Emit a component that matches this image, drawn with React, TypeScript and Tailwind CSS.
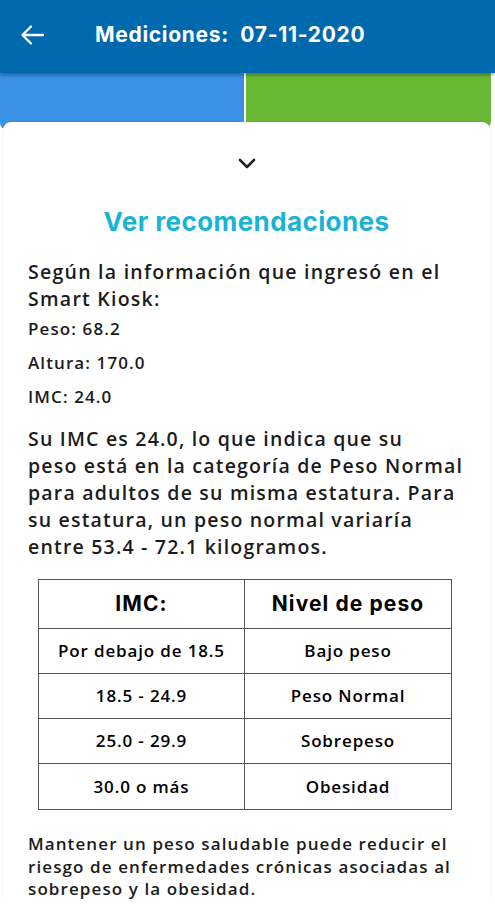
import React from "react";

const rows: [string, string][] = [
  ["Por debajo de 18.5", "Bajo peso"],
  ["18.5 - 24.9", "Peso Normal"],
  ["25.0 - 29.9", "Sobrepeso"],
  ["30.0 o más", "Obesidad"],
];

const paraLines = [
  "Su IMC es 24.0, lo que indica que su",
  "peso está en la categoría de Peso Normal",
  "para adultos de su misma estatura. Para",
  "su estatura, un peso normal variaría",
  "entre 53.4 - 72.1 kilogramos.",
];

const head = { fontFamily: 'Inter, "Open Sans", sans-serif' };

export default function App() {
  return (
    <div className="w-[495px] h-[906px] overflow-hidden bg-white relative" style={{ fontFamily: '"Open Sans", "Noto Sans", sans-serif' }}>
      <header className="h-[73px] bg-[#0068ad] flex items-center relative z-20 shadow-[0_2px_4px_rgba(0,0,0,0.35)]">
        <svg className="ml-[20px] mt-[-3px]" width="26" height="24" viewBox="0 0 26 24" fill="none" stroke="white" strokeWidth="2.3" strokeLinecap="round" strokeLinejoin="round">
          <path d="M23 12H3" />
          <path d="M11 3.5L2.5 12L11 20.5" />
        </svg>
        <h1 className="ml-[49px] mt-[-4px] text-white text-[21px] font-bold tracking-[0.7px]" style={head}>
          Mediciones:&nbsp; 07-11-2020
        </h1>
      </header>
      <div className="flex h-[56px] relative z-0">
        <div className="w-[244px] bg-[#3b91e6] rounded-bl-[6px]" />
        <div className="w-[2px] bg-white" />
        <div className="w-[245px] bg-[#6ab934] rounded-br-[8px]" />
      </div>
      <main className="relative z-10 mt-[-7px] mx-[3px] w-[487px] bg-white rounded-t-[8px] shadow-[0_-1px_2px_rgba(0,0,0,0.08)]">
        <div className="flex justify-center pt-[34px]">
          <svg width="22" height="14" viewBox="0 0 22 14" fill="none" stroke="#222" strokeWidth="2.6" strokeLinecap="round" strokeLinejoin="round">
            <path d="M4 4l7 7 7-7" />
          </svg>
        </div>
        <h2 className="mt-[36px] text-center text-[#1ab3d6] text-[26px] font-bold leading-[32px] tracking-[0.4px]" style={head}>
          Ver recomendaciones
        </h2>
        <div className="pl-[25px] pr-[20px] text-[#1c1c1c]">
          <p className="mt-[20px] text-[19.5px] font-semibold leading-[27px] tracking-[1.25px]">
            Según la información que ingresó en el Smart Kiosk:
          </p>
          <p className="mt-[6px] text-[17px] font-semibold leading-[22px] tracking-[1.1px]">Peso: 68.2</p>
          <p className="mt-[12px] text-[17px] font-semibold leading-[22px] tracking-[1.1px]">Altura: 170.0</p>
          <p className="mt-[12px] text-[17px] font-semibold leading-[22px] tracking-[1.1px]">IMC: 24.0</p>
          <p className="mt-[17px] text-[19.5px] font-semibold leading-[27px] tracking-[1.2px]">
            {paraLines.map((l) => (
              <span key={l} className="block whitespace-nowrap">{l}</span>
            ))}
          </p>
        </div>
        <div className="mt-[19px] ml-[35px] w-[414px] border-[1.5px] border-[#555] grid grid-cols-2">
          <div className="h-[49px] flex items-center justify-center border-r-[1.5px] border-b-[1.5px] border-[#555] text-[21px] font-bold tracking-[1.1px]" style={head}>IMC:</div>
          <div className="h-[49px] flex items-center justify-center border-b-[1.5px] border-[#555] text-[21px] font-bold tracking-[1.1px]" style={head}>Nivel de peso</div>
          {rows.map(([a, b], i) => (
            <React.Fragment key={a}>
              <div className={`h-[45px] flex items-center justify-center border-r-[1.5px] border-[#555] text-[17px] font-semibold tracking-[0.85px] ${i < rows.length - 1 ? "border-b-[1.5px]" : ""}`}>{a}</div>
              <div className={`h-[45px] flex items-center justify-center border-[#555] text-[17px] font-semibold tracking-[0.85px] ${i < rows.length - 1 ? "border-b-[1.5px]" : ""}`}>{b}</div>
            </React.Fragment>
          ))}
        </div>
        <p className="mt-[23px] px-[25px] text-[17px] font-semibold leading-[22.5px] tracking-[1.1px] text-[#1c1c1c]">
          Mantener un peso saludable puede reducir el riesgo de enfermedades crónicas asociadas al sobrepeso y la obesidad.
        </p>
      </main>
    </div>
  );
}
